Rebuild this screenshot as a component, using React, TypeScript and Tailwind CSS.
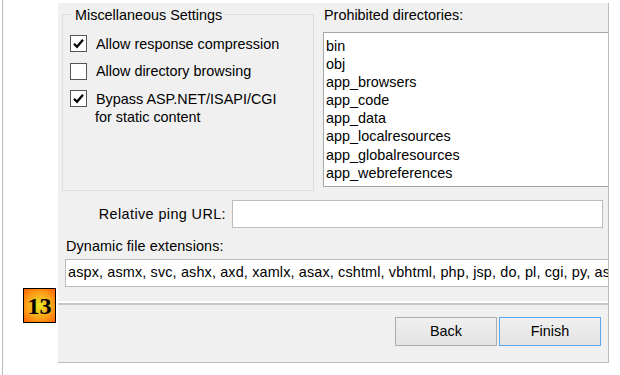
import React from 'react';

const dirs = [
  'bin',
  'obj',
  'app_browsers',
  'app_code',
  'app_data',
  'app_localresources',
  'app_globalresources',
  'app_webreferences',
];

function CheckBox({ checked }: { checked: boolean }) {
  return (
    <div className="w-[17px] h-[17px] shrink-0 border border-[#555555] bg-white flex items-center justify-center">
      {checked && (
        <svg width="13" height="13" viewBox="0 0 13 13">
          <path d="M2 6.8 L5 9.8 L11 2.8" fill="none" stroke="#000" strokeWidth="2.3" strokeLinejoin="miter" />
        </svg>
      )}
    </div>
  );
}

function Option({ checked, children }: { checked: boolean; children: React.ReactNode }) {
  return (
    <div className="flex items-start pl-[7px]">
      <CheckBox checked={checked} />
      <div className="ml-[9px] leading-[18px] -mt-[0.5px]">{children}</div>
    </div>
  );
}

export default function App() {
  return (
    <div className="w-[620px] h-[375px] bg-white flex text-[14.4px] text-black font-['Liberation_Sans',Arial,sans-serif] overflow-hidden">
      {/* left gutter with page edge and step badge */}
      <div className="flex w-[58px] shrink-0">
        <div className="w-[2px]" />
        <div className="w-px h-full bg-[#bdbdbd]" />
        <div className="pl-[20px] pt-[288px]">
          <div className="w-[33px] h-[35px] border border-black bg-[radial-gradient(circle,#e4e620_0%,#fca31a_55%,#ff6000_100%)] flex items-center justify-center">
            <span className="font-['Liberation_Serif',serif] font-bold text-[24px] leading-none mt-[1px]">13</span>
          </div>
        </div>
      </div>

      {/* dialog */}
      <div className="mt-[3px] w-[551px] h-[360px] shrink-0 bg-[#f0f0f0] border-r border-b border-[#bcbcbc] overflow-hidden flex flex-col">
        <div className="flex items-start h-[188px] shrink-0">
          {/* Miscellaneous Settings group */}
          <div className="ml-[4px] mt-[11px] w-[252px] h-[177px] shrink-0 border border-[#dcdcdc]">
            <div className="-mt-[8px] ml-[9px] px-[3px] w-fit bg-[#f0f0f0] leading-[17px]">Miscellaneous Settings</div>
            <div className="mt-[11px] flex flex-col gap-[10px]">
              <Option checked>Allow response compression</Option>
              <Option checked={false}>Allow directory browsing</Option>
              <Option checked>
                Bypass ASP.NET/ISAPI/CGI
                <br />
                <span className="-ml-[1px]">for static content</span>
              </Option>
            </div>
          </div>

          {/* Prohibited directories */}
          <div className="ml-[9px] flex flex-col">
            <div className="mt-[4px] leading-[17px] pl-[1px]">Prohibited directories:</div>
            <div className="mt-[8px] w-[320px] h-[155px] border border-[#a7a7a7] bg-white pt-[4px] pl-[2px]">
              {dirs.map((d) => (
                <div key={d} className="leading-[18.1px]">
                  {d}
                </div>
              ))}
            </div>
          </div>
        </div>

        {/* Relative ping URL */}
        <div className="mt-[9px] flex items-center">
          <div className="w-[168px] text-right leading-[17px] tracking-[0.4px]">Relative ping URL:</div>
          <div className="ml-[6px] w-[371px] h-[28px] border border-[#bcbcbc] bg-white" />
        </div>

        {/* Dynamic file extensions */}
        <div className="mt-[10px] pl-[8px] leading-[17px] tracking-[0.1px]">Dynamic file extensions:</div>
        <div className="mt-[4px] ml-[7px] w-[600px] h-[28px] shrink-0 border border-[#bcbcbc] bg-white flex items-center pl-[2px] whitespace-nowrap overflow-hidden tracking-[0.15px]">
          aspx, asmx, svc, ashx, axd, xamlx, asax, cshtml, vbhtml, php, jsp, do, pl, cgi, py, asp
        </div>

        {/* separator */}
        <div className="mt-[14px] h-[2px] bg-white shrink-0" />
        <div className="h-[2px] bg-[#c8c8c8] shrink-0" />

        {/* buttons */}
        <div className="mt-[12px] flex justify-end gap-[2px] pr-[7px]">
          <button className="w-[102px] h-[29px] border border-[#adadad] bg-gradient-to-b from-[#f0f0f0] to-[#e3e3e3] leading-none">
            Back
          </button>
          <button className="w-[102px] h-[29px] border border-[#5aa5ef] bg-gradient-to-b from-[#f0f0f0] to-[#e3e3e3] leading-none">
            Finish
          </button>
        </div>
      </div>
    </div>
  );
}
